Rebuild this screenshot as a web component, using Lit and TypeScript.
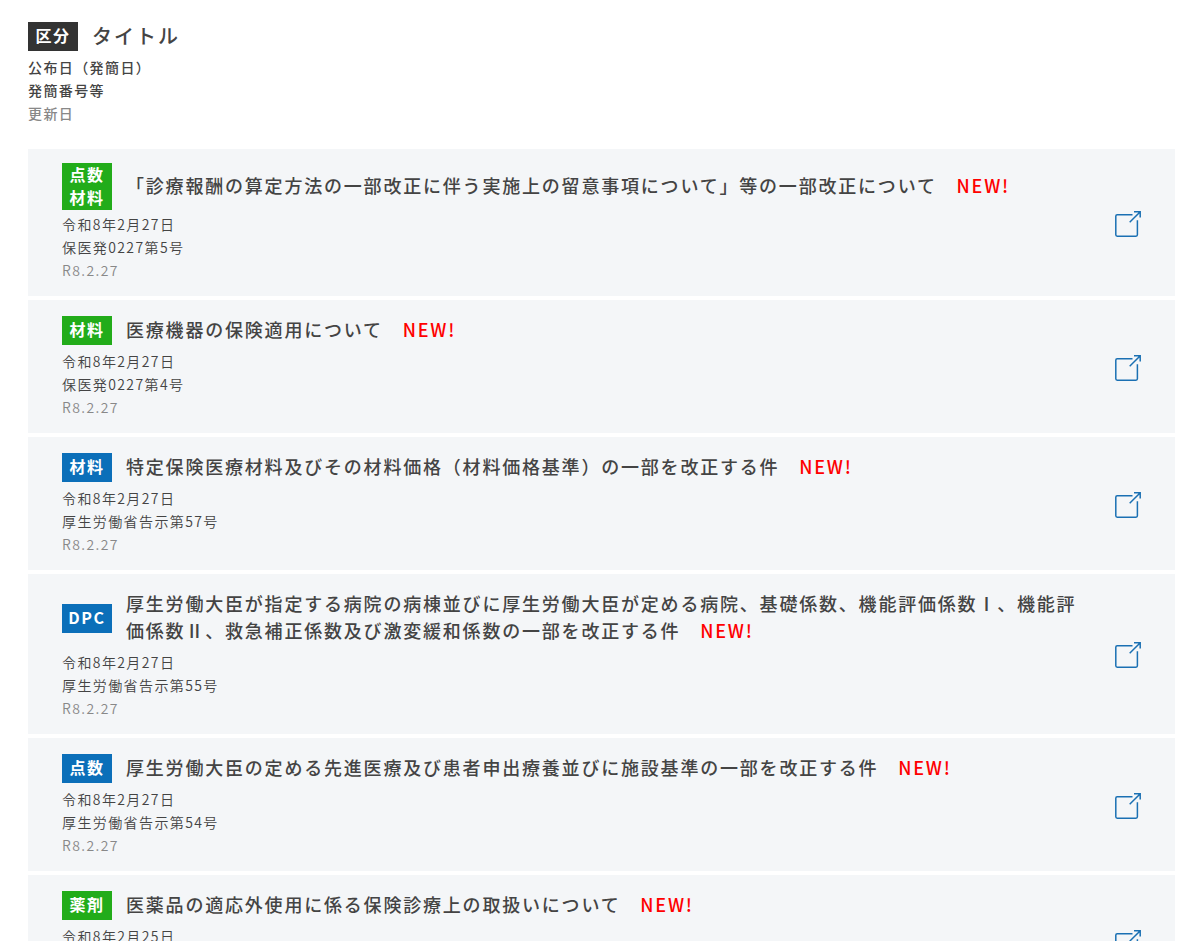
import { LitElement, html, css, nothing } from "lit";
import { customElement, property } from "lit/decorators.js";
import { classMap } from "lit/directives/class-map.js";

type Tone = "green" | "blue" | "dark";

interface Notice {
  tags: string[];
  tone: Tone;
  title: string;
  date: string;
  number?: string;
  updated?: string;
}

const NOTICES: Notice[] = [
  {
    tags: ["点数", "材料"],
    tone: "green",
    title: "「診療報酬の算定方法の一部改正に伴う実施上の留意事項について」等の一部改正について",
    date: "令和8年2月27日",
    number: "保医発0227第5号",
    updated: "R8.2.27",
  },
  {
    tags: ["材料"],
    tone: "green",
    title: "医療機器の保険適用について",
    date: "令和8年2月27日",
    number: "保医発0227第4号",
    updated: "R8.2.27",
  },
  {
    tags: ["材料"],
    tone: "blue",
    title: "特定保険医療材料及びその材料価格（材料価格基準）の一部を改正する件",
    date: "令和8年2月27日",
    number: "厚生労働省告示第57号",
    updated: "R8.2.27",
  },
  {
    tags: ["DPC"],
    tone: "blue",
    title:
      "厚生労働大臣が指定する病院の病棟並びに厚生労働大臣が定める病院、基礎係数、機能評価係数Ⅰ、機能評価係数Ⅱ、救急補正係数及び激変緩和係数の一部を改正する件",
    date: "令和8年2月27日",
    number: "厚生労働省告示第55号",
    updated: "R8.2.27",
  },
  {
    tags: ["点数"],
    tone: "blue",
    title: "厚生労働大臣の定める先進医療及び患者申出療養並びに施設基準の一部を改正する件",
    date: "令和8年2月27日",
    number: "厚生労働省告示第54号",
    updated: "R8.2.27",
  },
  {
    tags: ["薬剤"],
    tone: "green",
    title: "医薬品の適応外使用に係る保険診療上の取扱いについて",
    date: "令和8年2月25日",
  },
];

@customElement("category-badge")
class CategoryBadge extends LitElement {
  static styles = css`
    :host {
      display: block;
      flex: none;
      width: 50px;
    }
    .badge {
      display: flex;
      flex-direction: column;
      justify-content: center;
      box-sizing: border-box;
      min-height: 29px;
      padding-bottom: 2px;
      color: #fff;
      font-size: 16px;
      font-weight: 700;
      line-height: 23px;
      letter-spacing: 0.1em;
      text-align: center;
    }
    .pair {
      padding-bottom: 1px;
    }
    .green {
      background: #22ac1a;
    }
    .blue {
      background: #0b6fb9;
    }
    .dark {
      background: #333;
    }
  `;

  @property({ attribute: false }) tags: string[] = [];
  @property() tone: Tone = "green";

  render() {
    const classes = { badge: true, pair: this.tags.length > 1, [this.tone]: true };
    return html`<div class=${classMap(classes)}>
      ${this.tags.map((t) => html`<span>${t}</span>`)}
    </div>`;
  }
}

@customElement("app-root")
class AppRoot extends LitElement {
  static styles = css`
    :host {
      display: block;
      padding: 22px 6px 24px 28px;
      background: #fff;
      color: #444;
      font-family: "Noto Sans CJK JP", "Noto Sans", sans-serif;
      font-size: 14px;
      line-height: 23px;
      letter-spacing: 0.1em;
    }
    .legend {
      margin-bottom: 24px;
    }
    .heading {
      display: flex;
      align-items: center;
      gap: 14px;
      margin-bottom: 5px;
    }
    .heading category-badge {
      margin: -2px 0;
    }
    .title {
      margin: 0;
      padding-bottom: 2px;
      font-size: 18px;
      font-weight: 500;
      line-height: 27px;
      letter-spacing: 0.1em;
    }
    .legend .title {
      font-size: 20px;
    }
    .new {
      color: #f00;
    }
    .line {
      margin: 0;
      font-weight: 350;
    }
    .legend .line {
      font-weight: 500;
    }
    .line.updated {
      color: #888;
    }
    .list {
      display: grid;
      gap: 4px;
      margin: 0;
      padding: 0;
      list-style: none;
    }
    .card {
      display: flex;
      align-items: center;
      gap: 24px;
      box-sizing: border-box;
      min-height: 133px;
      padding: 16px 34px 14px;
      background: #f4f6f8;
      color: inherit;
      text-decoration: none;
    }
    .body {
      flex: 1;
      min-width: 0;
      align-self: flex-start;
    }
    .icon {
      flex: none;
      width: 26px;
      height: 26px;
      fill: none;
      stroke: #1a70b3;
    }
  `;

  private card(n: Notice) {
    return html`<li>
      <a class="card" href="#">
        <div class="body">
          <div class="heading">
            <category-badge .tags=${n.tags} tone=${n.tone}></category-badge>
            <h2 class="title">${n.title}　<span class="new">NEW!</span></h2>
          </div>
          <p class="line">${n.date}</p>
          ${n.number ? html`<p class="line">${n.number}</p>` : nothing}
          ${n.updated ? html`<p class="line updated">${n.updated}</p>` : nothing}
        </div>
        <svg class="icon" viewBox="0 0 26 26" aria-hidden="true">
          <path
            stroke-width="1.5"
            d="M17.5 3.8H2.2Q.8 3.8 .8 5.2V23.8Q.8 25.2 2.2 25.2H21Q22.4 25.2 22.4 23.8V9.2"
          />
          <path stroke-width="1.5" d="M14.7 11.3L25 1M19 .8H25.2V6.6" />
        </svg>
      </a>
    </li>`;
  }

  render() {
    return html`
      <header class="legend">
        <div class="heading">
          <category-badge .tags=${["区分"]} tone="dark"></category-badge>
          <p class="title">タイトル</p>
        </div>
        <p class="line">公布日（発簡日）</p>
        <p class="line">発簡番号等</p>
        <p class="line updated">更新日</p>
      </header>
      <ul class="list">
        ${NOTICES.map((n) => this.card(n))}
      </ul>
    `;
  }
}
